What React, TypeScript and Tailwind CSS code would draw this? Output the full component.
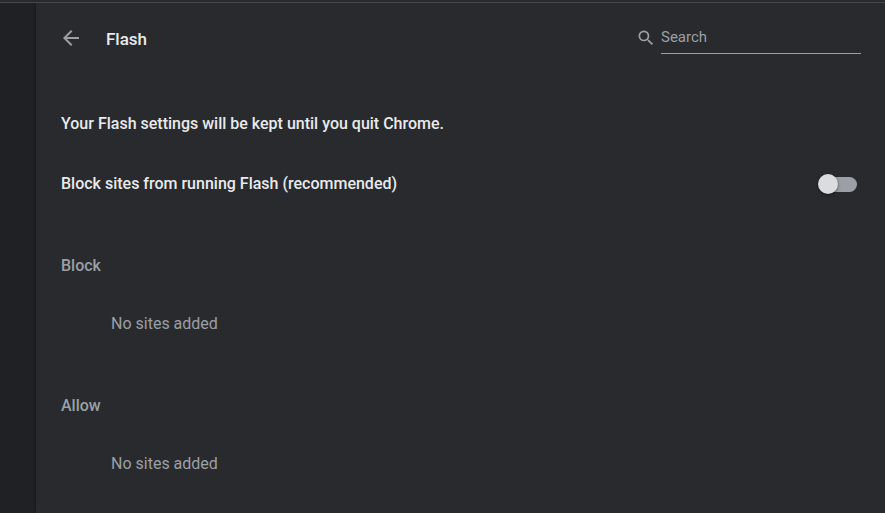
import React, { useState } from "react";

const SiteSection: React.FC<{ title: string }> = ({ title }) => {
  return (
    <section className="mt-6">
      <h2 className="flex h-14 items-center font-medium text-[#9aa0a6]">
        {title}
      </h2>
      <p className="flex h-15 items-center pl-[50px] text-[#9aa0a6]">
        No sites added
      </p>
    </section>
  );
};

const App: React.FC = () => {
  const [allowed, setAllowed] = useState(false);

  return (
    <div className="flex min-h-screen flex-col bg-[#202124] font-[Roboto,sans-serif] text-base text-[#e8eaed]">
      <div className="h-[3px] border-b border-[#46474a] bg-[#292a2d]" />

      <main className="ml-9 flex-1 bg-[#292a2d] pr-6 pl-[25px] shadow-[0_0_3px_rgba(0,0,0,0.4)] [clip-path:inset(0_0_0_-6px)]">
        <header className="flex h-[70px] items-center justify-between">
          <div className="flex items-center gap-[25px]">
            <button type="button" aria-label="Back" className="text-[#9aa0a6]">
              <svg viewBox="2 2 20 20" className="size-5" fill="currentColor">
                <path d="M20 11H7.83l5.59-5.59L12 4l-8 8 8 8 1.41-1.41L7.83 13H20v-2z" />
              </svg>
            </button>
            <h1 className="pt-1 text-[17px] font-medium">Flash</h1>
          </div>

          <label className="flex items-center gap-[5px] text-[#9aa0a6]">
            <svg viewBox="0 0 24 24" className="size-5" fill="currentColor">
              <path d="M15.5 14h-.79l-.28-.27A6.471 6.471 0 0 0 16 9.5 6.5 6.5 0 1 0 9.5 16c1.61 0 3.09-.59 4.23-1.57l.27.28v.79l5 4.99L20.49 19l-4.99-5zm-6 0C7.01 14 5 11.99 5 9.5S7.01 5 9.5 5 14 7.01 14 9.5 11.99 14 9.5 14z" />
            </svg>
            <input
              type="search"
              aria-label="Search"
              placeholder="Search"
              className="h-8 w-50 border-b border-[#9aa0a6] pb-px text-[15px] text-[#e8eaed] outline-none placeholder:text-[#9aa0a6]"
            />
          </label>
        </header>

        <p className="mt-[21px] flex h-15 items-center font-medium">
          Your Flash settings will be kept until you quit Chrome.
        </p>

        <label className="flex h-15 items-center justify-between font-medium">
          Block sites from running Flash (recommended)
          <span className="relative mr-1 flex h-5 w-[39px] items-center">
            <input
              type="checkbox"
              role="switch"
              checked={allowed}
              onChange={(e) => setAllowed(e.target.checked)}
              className="peer ml-px h-[15px] w-full appearance-none rounded-full bg-[#9aa0a6] checked:bg-[#8ab4f8]/50"
            />
            <span className="pointer-events-none absolute left-0 size-5 rounded-full bg-[#dadce0] shadow-[0_1px_3px_rgba(0,0,0,0.5)] peer-checked:left-[19px] peer-checked:bg-[#8ab4f8]" />
          </span>
        </label>

        <SiteSection title="Block" />
        <SiteSection title="Allow" />
      </main>
    </div>
  );
};

export default App;
